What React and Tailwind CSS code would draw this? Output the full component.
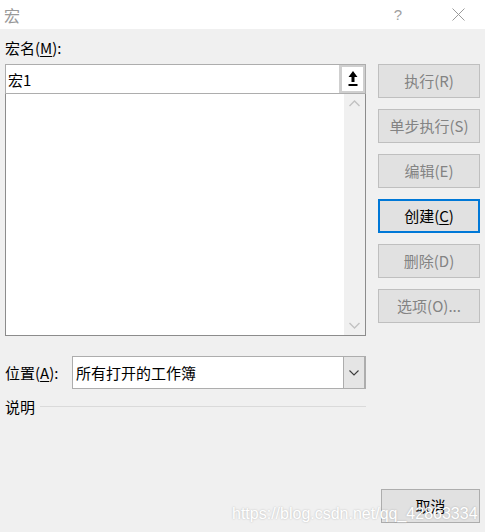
import React from "react";

function Btn({ children, disabled = true, focused = false }) {
  return (
    <div
      className={
        "h-[34px] w-[102px] flex items-center justify-center bg-[#e1e1e1] text-[15px] " +
        (focused
          ? "border-2 border-[#0078d7] text-black"
          : "border border-[#bfbfbf] " + (disabled ? "text-[#838383]" : "text-black"))
      }
    >
      {children}
    </div>
  );
}

export default function App() {
  return (
    <div className="w-[485px] h-[532px] bg-[#f0f0f0] relative flex flex-col font-['Noto_Sans_CJK_SC','Noto_Sans',sans-serif] text-[15px] text-black overflow-hidden">
      {/* Title bar */}
      <div className="h-[29px] bg-white flex items-center shrink-0">
        <span className="pl-[4px] text-[16px] text-[#999999] leading-none">宏</span>
        <span className="ml-auto text-[15px] text-[#a0a0a0] leading-none font-['Liberation_Sans',sans-serif] mr-[50px]">?</span>
        <svg width="13" height="13" viewBox="0 0 13 13" className="mr-[20px] mb-[1px]">
          <path d="M0.5 0.5 L12.5 12.5 M12.5 0.5 L0.5 12.5" stroke="#9a9a9a" strokeWidth="1" fill="none" />
        </svg>
      </div>

      <div className="flex-1 flex flex-col">
        <div className="flex pl-[5px]">
          {/* Left column */}
          <div className="w-[361px] flex flex-col">
            <div className="h-[35px] pt-[9px] leading-[20px]">
              宏名(<span className="underline underline-offset-2">M</span>):
            </div>
            <div className="h-[30px] border border-[#adadad] bg-white flex items-stretch">
              <div className="flex-1 flex items-center pl-[2px] leading-none">宏1</div>
              <div className="w-[26px] bg-[#cfcfcf] p-[2px] pl-[3px] flex">
                <div className="flex-1 bg-white flex items-center justify-center">
                  <svg width="10" height="18" viewBox="0 0 10 18">
                    <path d="M5 1 L9.5 7 L6.5 7 L6.5 12 L3.5 12 L3.5 7 L0.5 7 Z" fill="#000" />
                    <rect x="0.5" y="14" width="9" height="2" fill="#000" />
                  </svg>
                </div>
              </div>
            </div>
            <div className="h-[242px] border border-[#8c8c8c] border-t-0 bg-white flex">
              <div className="flex-1" />
              <div className="w-[21px] bg-[#f0f0f0] flex flex-col items-center justify-between py-[6px]">
                <svg width="11" height="7" viewBox="0 0 11 7">
                  <path d="M0.5 6 L5.5 1 L10.5 6" stroke="#c2c2c2" strokeWidth="1.4" fill="none" />
                </svg>
                <svg width="11" height="7" viewBox="0 0 11 7">
                  <path d="M0.5 1 L5.5 6 L10.5 1" stroke="#c2c2c2" strokeWidth="1.4" fill="none" />
                </svg>
              </div>
            </div>

            <div className="mt-[20px] h-[33px] flex items-center">
              <div className="w-[67px] leading-none">
                位置(<span className="underline underline-offset-2">A</span>):
              </div>
              <div className="flex-1 h-full border border-[#adadad] bg-white flex items-stretch">
                <div className="flex-1 flex items-center pl-[3px] leading-none">所有打开的工作簿</div>
                <div className="w-[22px] bg-[#e5e5e5] border-l border-[#adadad] border-r border-r-[#adadad] flex items-center justify-center">
                  <svg width="10" height="6" viewBox="0 0 10 6">
                    <path d="M0.5 0.5 L5 5 L9.5 0.5" stroke="#3c3c3c" strokeWidth="1.1" fill="none" />
                  </svg>
                </div>
              </div>
            </div>

            <div className="mt-[7px] flex items-center h-[20px]">
              <span className="leading-none">说明</span>
              <div className="flex-1 h-px bg-[#dadada] ml-[5px]" />
            </div>
          </div>

          {/* Right column */}
          <div className="ml-[12px] w-[102px] pt-[35px] flex flex-col gap-[11px]">
            <Btn>执行(R)</Btn>
            <Btn>单步执行(S)</Btn>
            <Btn>编辑(E)</Btn>
            <Btn focused>
              创建(<span className="underline underline-offset-2">C</span>)
            </Btn>
            <Btn>删除(D)</Btn>
            <Btn>选项(O)...</Btn>
          </div>
        </div>

        <div className="mt-auto flex justify-end pr-[5px] pb-[9px]">
          <div className="h-[34px] w-[99px] flex items-center justify-center bg-[#e1e1e1] border border-[#adadad] text-[15px] text-black">
            取消
          </div>
        </div>
      </div>

      <div className="absolute left-[232px] top-[505px] text-[16px] leading-[18px] text-white font-['Liberation_Sans',sans-serif] [text-shadow:0_0_2px_rgba(0,0,0,0.25)] pointer-events-none whitespace-nowrap">
        https://blog.csdn.net/qq_42863334
      </div>
    </div>
  );
}
